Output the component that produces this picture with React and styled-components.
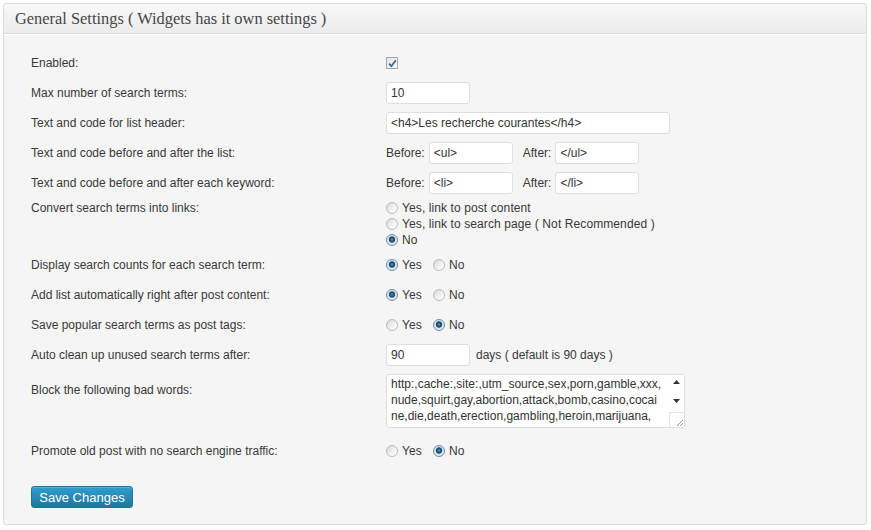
import React from 'react';
import styled, { createGlobalStyle } from 'styled-components';

const Global = createGlobalStyle`
  html, body { margin: 0; padding: 0; background: #fff; }
  body { font-family: "Liberation Sans", Arial, sans-serif; }
`;

const Page = styled.div`
  padding: 3px 4px 4px 3px;
`;

const Panel = styled.section`
  width: 864px;
  box-sizing: border-box;
  border: 1px solid #dcdcdc;
  border-radius: 3px;
  background: #f5f5f5;
`;

const Header = styled.h3`
  margin: 0;
  height: 29px;
  padding: 0 11px;
  display: flex;
  align-items: center;
  font-family: "Liberation Serif", "Times New Roman", serif;
  font-weight: normal;
  font-size: 16.4px;
  color: #464646;
  background: linear-gradient(#f8f8f8, #ececec);
  border-bottom: 1px solid #dcdcdc;
  box-shadow: 0 1px 0 #fff;
  border-radius: 3px 3px 0 0;
`;

const Body = styled.div`
  padding: 14px 0 16px 27px;
`;

const Row = styled.div`
  display: flex;
  padding: ${p => (p.$compact ? '2px 0' : '4px 0')};
  ${p => p.$tall && 'padding-bottom: 8px;'}
`;

const Label = styled.div`
  width: 355px;
  flex: none;
  font-size: 12px;
  line-height: 16px;
  color: #383838;
  padding-top: ${p => (p.$top !== undefined ? p.$top : 3)}px;
`;

const Value = styled.div`
  display: flex;
  flex-direction: ${p => (p.$column ? 'column' : 'row')};
  align-items: ${p => (p.$column ? 'flex-start' : 'center')};
  min-height: 22px;
  font-size: 12px;
  color: #383838;
`;

const Input = styled.input`
  box-sizing: border-box;
  width: ${p => p.$w || 84}px;
  height: 22px;
  border: 1px solid #dfdfdf;
  border-radius: 3px;
  background: #fff;
  padding: 0 4px;
  font-family: "Liberation Sans", Arial, sans-serif;
  font-size: 12px;
  color: #333;
  outline: none;
`;

const Inline = styled.span`
  margin: ${p => p.$m || '0'};
  font-size: 12px;
  color: #383838;
  line-height: 16px;
`;

const Box = styled.span`
  width: 12px;
  height: 12px;
  box-sizing: border-box;
  border: 1px solid #a9a9a9;
  background: linear-gradient(135deg, #e0e3e8, #fafafa);
  display: inline-flex;
  align-items: center;
  justify-content: center;
`;

const Choice = styled.label`
  display: inline-flex;
  align-items: center;
  margin-right: ${p => (p.$gap ? 11 : 0)}px;
  font-size: 12px;
  line-height: 16px;
  color: #383838;
  letter-spacing: 0.1px;
`;

const RadioDot = styled.span`
  width: 12px;
  height: 12px;
  box-sizing: border-box;
  border-radius: 50%;
  margin-right: 4px;
  flex: none;
  border: 1px solid ${p => (p.$on ? '#6f8ea6' : '#b9bdc1')};
  background: ${p =>
    p.$on
      ? 'radial-gradient(circle at 50% 45%, #6fa3c8 0, #23597f 1.6px, #1b4e73 2.8px, #d7e2ea 3.6px, #eef2f5 100%)'
      : 'linear-gradient(135deg, #d3d6d9, #fbfbfb 75%)'};
`;

const TextBox = styled.div`
  display: flex;
  width: 299px;
  height: 54px;
  box-sizing: border-box;
  border: 1px solid #dfdfdf;
  border-radius: 3px;
  background: #fff;
  overflow: hidden;
`;

const TextLines = styled.div`
  flex: 1;
  padding: 1px 0 0 4px;
  font-size: 12px;
  line-height: 16px;
  color: #333;
  white-space: nowrap;
  overflow: hidden;
`;

const Line = styled.div``;

const ScrollCol = styled.div`
  width: 15px;
  flex: none;
  display: flex;
  flex-direction: column;
  background: #fff;
`;

const Arrow = styled.div`
  height: ${p => p.$h}px;
  display: flex;
  align-items: center;
  justify-content: center;
`;

const Grip = styled.div`
  margin-top: auto;
  height: 14px;
  border-top: 1px solid #e4e4e4;
  border-left: 1px solid #e4e4e4;
  display: flex;
  align-items: flex-end;
  justify-content: flex-end;
`;

const Button = styled.button`
  margin-top: 20px;
  width: 102px;
  height: 22px;
  border: 1px solid #21759b;
  border-radius: 3px;
  background: linear-gradient(#2e9fd0, #21759b);
  color: #fff;
  font-family: "Liberation Sans", Arial, sans-serif;
  font-size: 13px;
  padding: 0;
  box-shadow: inset 0 1px 0 rgba(120, 200, 230, 0.5);
  cursor: pointer;
`;

const Radio = ({ on, gap, children }) => (
  <Choice $gap={gap}>
    <RadioDot $on={on} />
    {children}
  </Choice>
);

const YesNo = ({ yes }) => (
  <Value>
    <Radio on={yes} gap>Yes</Radio>
    <Radio on={!yes}>No</Radio>
  </Value>
);

export default function App() {
  return (
    <>
      <Global />
      <Page>
        <Panel>
          <Header>General Settings ( Widgets has it own settings )</Header>
          <Body>
            <Row>
              <Label>Enabled:</Label>
              <Value>
                <Box>
                  <svg width="9" height="9" viewBox="0 0 9 9">
                    <path d="M1.2 4.6 L3.4 7.2 L7.8 1.2" fill="none" stroke="#3d5f92" strokeWidth="1.7" />
                  </svg>
                </Box>
              </Value>
            </Row>
            <Row>
              <Label>Max number of search terms:</Label>
              <Value><Input defaultValue="10" /></Value>
            </Row>
            <Row>
              <Label>Text and code for list header:</Label>
              <Value><Input $w={284} defaultValue="<h4>Les recherche courantes</h4>" /></Value>
            </Row>
            <Row>
              <Label>Text and code before and after the list:</Label>
              <Value>
                <Inline $m="0 4px 0 0">Before:</Inline>
                <Input defaultValue="<ul>" />
                <Inline $m="0 4px 0 10px">After:</Inline>
                <Input defaultValue="</ul>" />
              </Value>
            </Row>
            <Row>
              <Label>Text and code before and after each keyword:</Label>
              <Value>
                <Inline $m="0 4px 0 0">Before:</Inline>
                <Input defaultValue="<li>" />
                <Inline $m="0 4px 0 10px">After:</Inline>
                <Input defaultValue="</li>" />
              </Value>
            </Row>
            <Row $compact>
              <Label $top={0}>Convert search terms into links:</Label>
              <Value $column>
                <Radio>Yes, link to post content</Radio>
                <Radio>Yes, link to search page ( Not Recommended )</Radio>
                <Radio on>No</Radio>
              </Value>
            </Row>
            <Row>
              <Label>Display search counts for each search term:</Label>
              <YesNo yes />
            </Row>
            <Row>
              <Label>Add list automatically right after post content:</Label>
              <YesNo yes />
            </Row>
            <Row>
              <Label>Save popular search terms as post tags:</Label>
              <YesNo />
            </Row>
            <Row>
              <Label>Auto clean up unused search terms after:</Label>
              <Value>
                <Input defaultValue="90" />
                <Inline $m="0 0 0 6px">days ( default is 90 days )</Inline>
              </Value>
            </Row>
            <Row $tall>
              <Label $top={8}>Block the following bad words:</Label>
              <TextBox>
                <TextLines>
                  <Line>http:,cache:,site:,utm_source,sex,porn,gamble,xxx,</Line>
                  <Line>nude,squirt,gay,abortion,attack,bomb,casino,cocai</Line>
                  <Line>ne,die,death,erection,gambling,heroin,marijuana,</Line>
                </TextLines>
                <ScrollCol>
                  <Arrow $h={14}>
                    <svg width="7" height="4" viewBox="0 0 7 4"><path d="M0 4 L3.5 0 L7 4 Z" fill="#333" /></svg>
                  </Arrow>
                  <Arrow $h={24}>
                    <svg width="7" height="4" viewBox="0 0 7 4"><path d="M0 0 L3.5 4 L7 0 Z" fill="#333" /></svg>
                  </Arrow>
                  <Grip>
                    <svg width="10" height="10" viewBox="0 0 10 10">
                      <path d="M9 3 L3 9 M9 6 L6 9" stroke="#999" strokeWidth="1" />
                    </svg>
                  </Grip>
                </ScrollCol>
              </TextBox>
            </Row>
            <Row>
              <Label>Promote old post with no search engine traffic:</Label>
              <YesNo />
            </Row>
            <Button>Save Changes</Button>
          </Body>
        </Panel>
      </Page>
    </>
  );
}
